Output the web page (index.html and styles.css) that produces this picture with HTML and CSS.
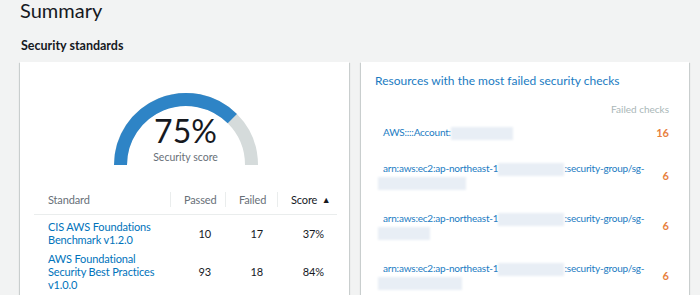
FILE: index.html
```html
<!DOCTYPE html>
<html lang="en">
  <head>
    <meta charset="UTF-8" />
    <meta name="viewport" content="width=device-width, initial-scale=1.0" />
    <title>Security Hub Summary</title>
    <link rel="stylesheet" href="styles.css">
  </head>
  <body>
    <h1>Summary</h1>
    <h2>Security standards</h2>
    <div class="panels">
      <div class="panel standards">
        <div class="gauge">
          <svg width="160" height="80" viewBox="0 0 160 80">
            <path d="M 14.5 76 A 65.5 65.5 0 0 1 145.5 76" fill="none" stroke="#d5dbdb" stroke-width="13" />
            <path d="M 14.5 76 A 65.5 65.5 0 0 1 126.32 29.68" fill="none" stroke="#2e84c6" stroke-width="13" />
          </svg>
          <div class="gauge-text">
            <div class="score">75%</div>
            <div class="score-label">Security score</div>
          </div>
        </div>
        <table>
          <colgroup>
            <col class="col-name" />
            <col class="col-passed" />
            <col class="col-failed" />
            <col class="col-score" />
          </colgroup>
          <thead>
            <tr>
              <th>Standard</th>
              <th class="num">Passed</th>
              <th class="num">Failed</th>
              <th class="num sorted">Score <span class="sort">&#9650;</span></th>
            </tr>
          </thead>
          <tbody>
            <tr>
              <td><a href="#">CIS AWS Foundations Benchmark v1.2.0</a></td>
              <td class="num">10</td>
              <td class="num">17</td>
              <td class="num">37%</td>
            </tr>
            <tr>
              <td><a href="#">AWS Foundational Security Best Practices v1.0.0</a></td>
              <td class="num">93</td>
              <td class="num">18</td>
              <td class="num">84%</td>
            </tr>
          </tbody>
        </table>
        <div class="actions">
          <button type="button" aria-label="View all standards"></button>
        </div>
      </div>

      <div class="panel resources">
        <h3>Resources with the most failed security checks</h3>
        <div class="col-head">Failed checks</div>
        <ul>
          <li>
            <a href="#"><span class="line">AWS::::Account:<span class="redact" style="width: 62px"></span></span></a>
            <span class="count">16</span>
          </li>
          <li>
            <a href="#">
              <span class="line">arn:aws:ec2:ap-northeast-1<span class="redact" style="width: 66px"></span>:security-group/sg-</span>
              <span class="line"><span class="redact first" style="width: 88px"></span></span>
            </a>
            <span class="count">6</span>
          </li>
          <li>
            <a href="#">
              <span class="line">arn:aws:ec2:ap-northeast-1<span class="redact" style="width: 66px"></span>:security-group/sg-</span>
              <span class="line"><span class="redact first" style="width: 52px"></span></span>
            </a>
            <span class="count">6</span>
          </li>
          <li>
            <a href="#">
              <span class="line">arn:aws:ec2:ap-northeast-1<span class="redact" style="width: 66px"></span>:security-group/sg-</span>
              <span class="line"><span class="redact first" style="width: 84px"></span></span>
            </a>
            <span class="count">6</span>
          </li>
        </ul>
      </div>
    </div>
  </body>
</html>
```

FILE: styles.css
```css
body {
  margin: 0;
  padding: 0 11px 0 20px;
  background-color: #f2f3f3;
  font-family: Lato, "Open Sans", Arial, sans-serif;
  color: #16191f;
  overflow: hidden;
}

h1 {
  margin: 0;
  font-size: 20px;
  line-height: 20px;
  font-weight: 400;
}

h2 {
  margin: 18px 0 8px 1px;
  font-size: 12.5px;
  line-height: 16px;
  font-weight: 700;
}

.panels {
  display: grid;
  grid-template-columns: 329px 328px;
  gap: 12px;
}

.panel {
  background-color: #fff;
  box-shadow: 0 1px 1px 0 rgba(0, 28, 36, 0.3), 1px 1px 1px 0 rgba(0, 28, 36, 0.12),
    -1px 1px 1px 0 rgba(0, 28, 36, 0.12);
  min-height: 260px;
}

/* left card */

.standards {
  padding: 27px 12px 20px 14px;
}

.gauge {
  display: grid;
  width: 160px;
  height: 80px;
  margin: 0 auto;
}

.gauge svg,
.gauge-text {
  grid-area: 1 / 1;
}

.gauge-text {
  align-self: end;
  text-align: center;
  margin-bottom: 5px;
}

.score {
  font-size: 32px;
  line-height: 32px;
  margin-bottom: 3px;
}

.score-label {
  font-size: 10.5px;
  line-height: 14px;
  color: #687078;
}

table {
  width: 303px;
  margin-top: 16px;
  border-collapse: collapse;
  table-layout: fixed;
  font-size: 11px;
  letter-spacing: -0.15px;
}

.col-name {
  width: 136px;
}

.col-passed {
  width: 55px;
}

.col-failed {
  width: 52px;
}

.col-score {
  width: 60px;
}

th {
  height: 29px;
  padding: 0 14px;
  font-weight: 400;
  color: #687078;
  text-align: left;
  white-space: nowrap;
  border-bottom: 1px solid #eaeded;
}

th + th {
  background: linear-gradient(#eaeded, #eaeded) left center / 1px 15px no-repeat;
}

th.sorted {
  padding-right: 12px;
  color: #16191f;
}

.sort {
  font-size: 9px;
  margin-left: 2px;
  vertical-align: 1px;
}

td {
  padding: 5px 14px 1px;
  line-height: 13px;
  vertical-align: middle;
  color: #16191f;
}

td:last-child {
  padding-right: 13px;
}

.num {
  text-align: right;
}

td a {
  color: #0073bb;
  text-decoration: none;
}

.actions {
  display: flex;
  justify-content: flex-end;
  margin-top: 4px;
}

button {
  width: 59px;
  height: 30px;
  border: 1px solid #aab7b8;
  border-radius: 2px;
  background-color: #fff;
}

/* right card */

.resources {
  padding: 11px 20px 0 14px;
}

h3 {
  margin: 0;
  font-size: 12px;
  line-height: 16px;
  font-weight: 400;
  color: #1a7bc2;
}

.col-head {
  margin-top: 14px;
  font-size: 10px;
  line-height: 12px;
  color: #aab7b8;
  text-align: right;
}

ul {
  list-style: none;
  margin: 0;
  padding: 0;
}

li {
  display: flex;
  justify-content: space-between;
  align-items: center;
  padding: 11px 0 11px 8px;
}

li a {
  color: #1a7bc2;
  text-decoration: none;
  font-size: 10px;
  letter-spacing: -0.2px;
  line-height: 12px;
}

.line {
  display: block;
  white-space: nowrap;
}

.redact {
  display: inline-block;
  height: 13px;
  vertical-align: middle;
  background-color: #e8eef5;
  filter: blur(1px);
}

.redact.first {
  margin-left: -5px;
}

.count {
  font-size: 11px;
  font-weight: 700;
  color: #e8813f;
}
```
